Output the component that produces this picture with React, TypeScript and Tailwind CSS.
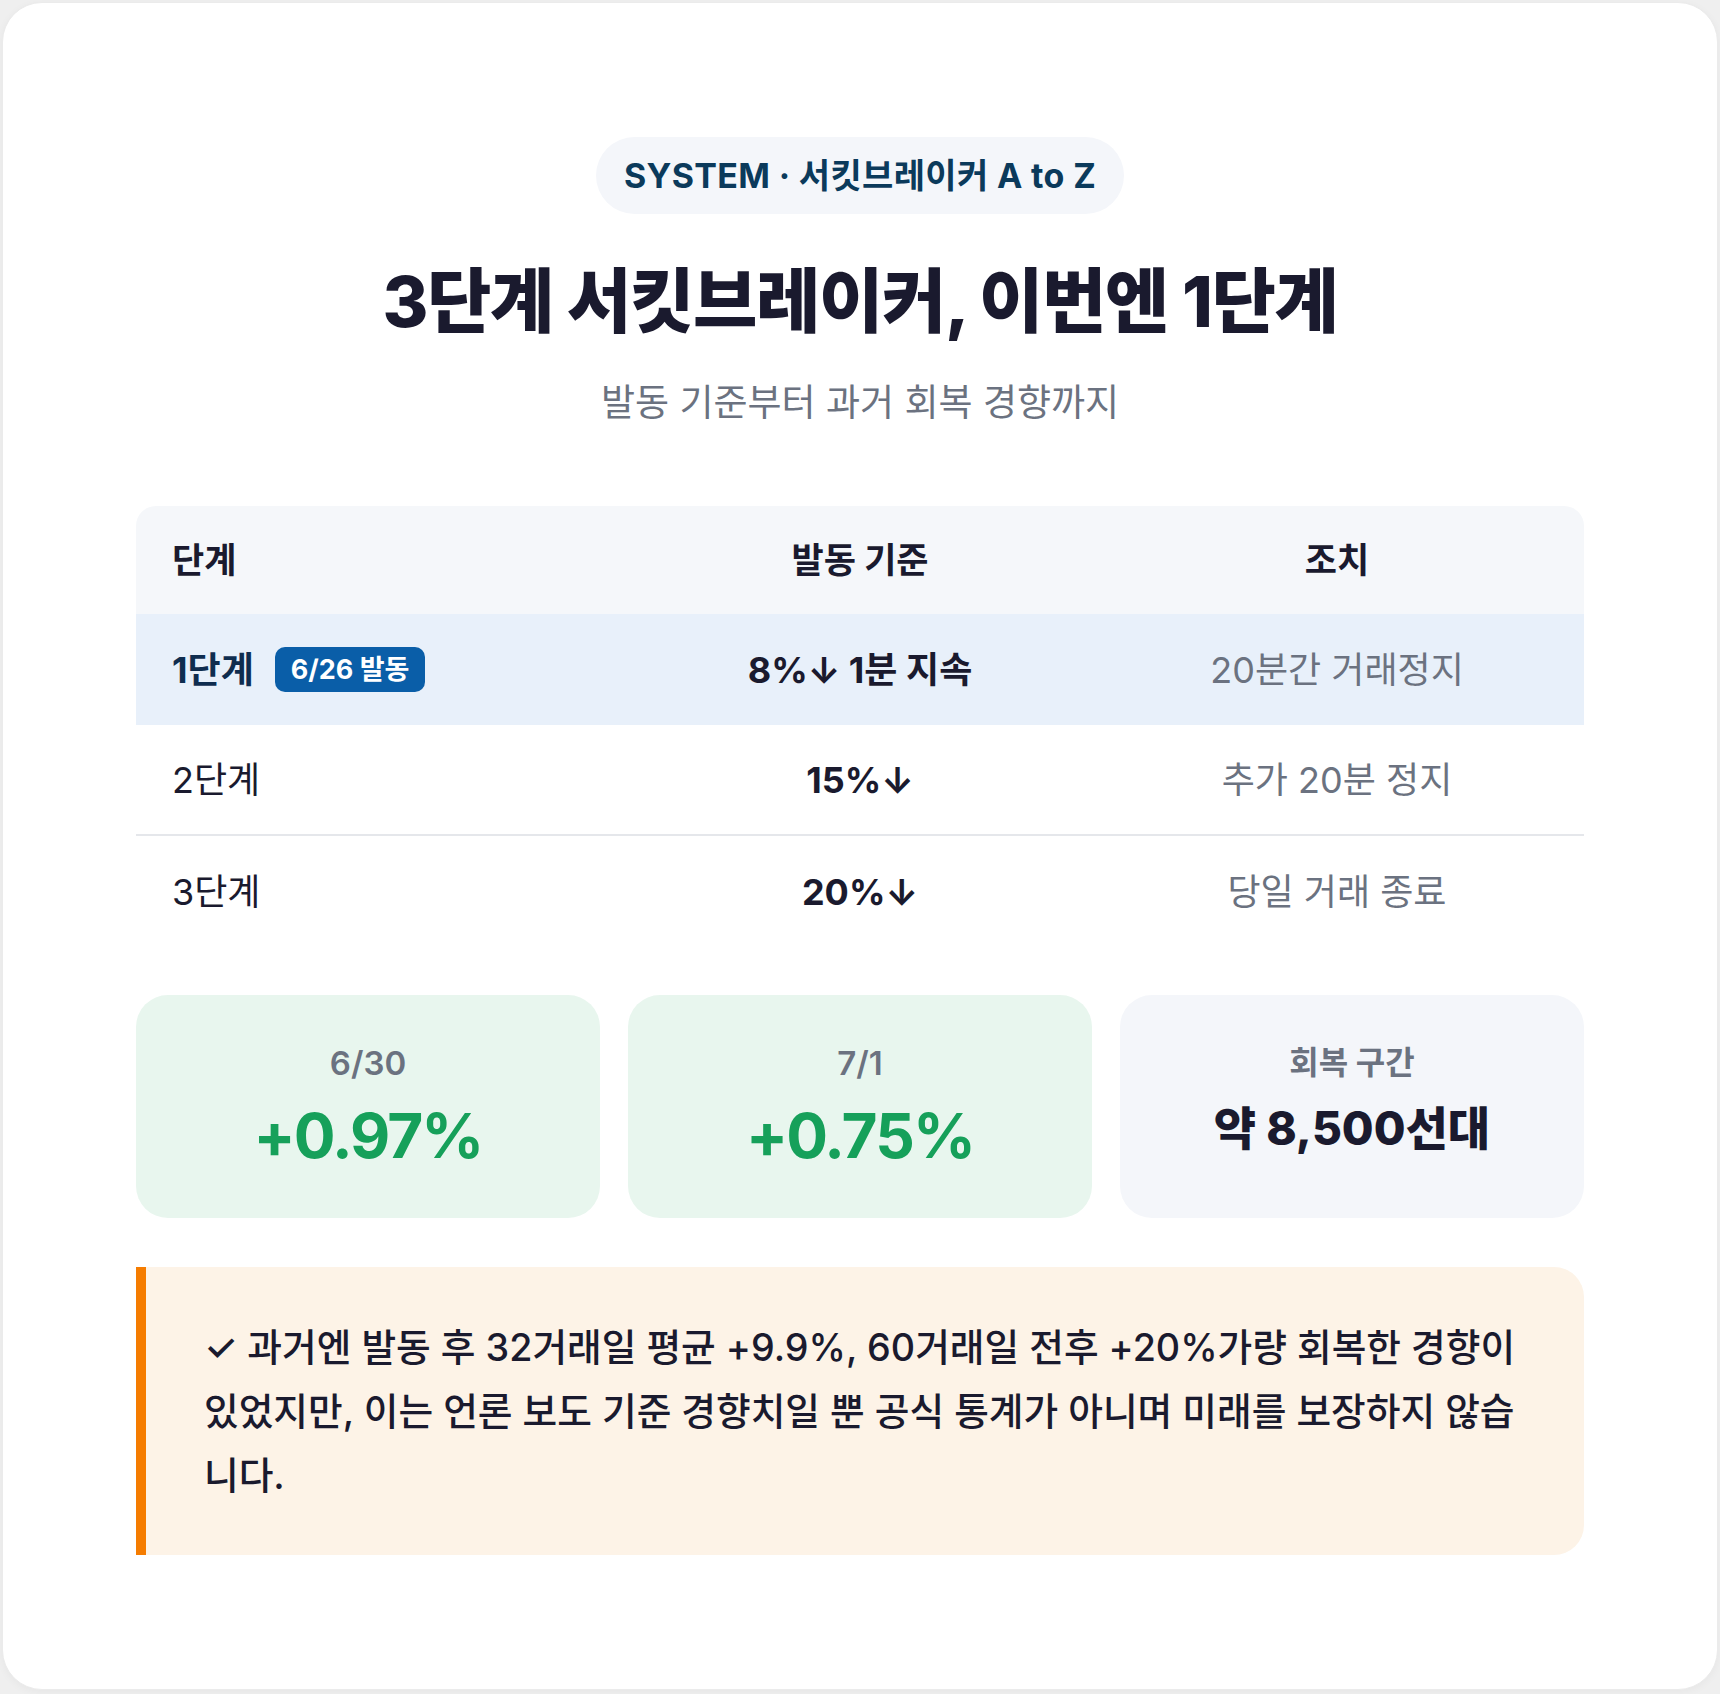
import React from 'react';

type Row = {
  stage: string;
  badge?: string;
  trigger: string;
  action: string;
  active?: boolean;
};

const rows: Row[] = [
  { stage: '1단계', badge: '6/26 발동', trigger: '8%↓ 1분 지속', action: '20분간 거래정지', active: true },
  { stage: '2단계', trigger: '15%↓', action: '추가 20분 정지' },
  { stage: '3단계', trigger: '20%↓', action: '당일 거래 종료' },
];

const App: React.FC = () => {
  return (
    <div className="min-h-screen bg-[#efefef] p-[2px] font-[Inter,'Noto_Sans_CJK_KR',sans-serif] text-[#1a1a2e]">
      <div className="h-[1688px] rounded-[40px] border border-[#ebebeb] bg-white px-[133px] pt-[134px] shadow-[0_2px_8px_rgba(0,0,0,0.04)]">
        {/* heading */}
        <div className="flex flex-col items-center">
          <div className="rounded-full bg-[#f4f6fa] px-7 py-4 text-[34px] font-bold leading-[45px] tracking-[0.01em] text-[#0b3a5b]">
            SYSTEM · 서킷브레이커 A to Z
          </div>
          <h1 className="mt-[48px] text-[70px] font-extrabold leading-[80px] tracking-[-0.02em]">
            3단계 서킷브레이커, 이번엔 1단계
          </h1>
          <p className="mt-[36px] text-[37px] leading-[50px] text-[#6b7280]">발동 기준부터 과거 회복 경향까지</p>
        </div>

        {/* table */}
        <div className="mt-[78px]">
          <div className="grid h-[108px] grid-cols-[494px_460px_494px] items-center rounded-t-[20px] bg-[#f5f7fa] text-[35px] font-bold">
            <div className="pl-9">단계</div>
            <div className="text-center">발동 기준</div>
            <div className="text-center">조치</div>
          </div>
          {rows.map((r, i) => (
            <div
              key={r.stage}
              className={
                'grid h-[111px] grid-cols-[494px_460px_494px] items-center text-[36px] ' +
                (r.active ? 'bg-[#e8f0fa] ' : '') +
                (i === 1 ? 'border-b-2 border-[#e5e7eb]' : '')
              }
            >
              <div className="flex items-center gap-[21px] pl-9">
                <span className={r.active ? 'font-bold text-[#0f2d4f]' : ''}>{r.stage}</span>
                {r.badge && (
                  <span className="rounded-[10px] bg-[#0a5ea8] px-4 py-[6px] text-[27px] font-bold leading-[33px] text-white">
                    {r.badge}
                  </span>
                )}
              </div>
              <div className="text-center font-bold">{r.trigger}</div>
              <div className="text-center text-[#6b7280]">{r.action}</div>
            </div>
          ))}
        </div>

        {/* stats */}
        <div className="mt-[48px] grid grid-cols-3 gap-7">
          <div className="flex h-[223px] flex-col items-center rounded-[32px] bg-[#e8f6ee] pt-[47px]">
            <div className="text-[33px] font-semibold leading-[42px] text-[#6b7280]">6/30</div>
            <div className="mt-[13px] text-[62px] font-bold leading-[77px] tracking-[-0.03em] text-[#16a05a]">+0.97%</div>
          </div>
          <div className="flex h-[223px] flex-col items-center rounded-[32px] bg-[#e8f6ee] pt-[47px]">
            <div className="text-[33px] font-semibold leading-[42px] text-[#6b7280]">7/1</div>
            <div className="mt-[13px] text-[62px] font-bold leading-[77px] tracking-[-0.03em] text-[#16a05a]">+0.75%</div>
          </div>
          <div className="flex h-[223px] flex-col items-center rounded-[32px] bg-[#f4f6fa] pt-[47px]">
            <div className="text-[32px] font-bold leading-[42px] text-[#6b7280]">회복 구간</div>
            <div className="mt-[17px] text-[46px] font-extrabold leading-[55px]">약 8,500선대</div>
          </div>
        </div>

        {/* note */}
        <div className="mt-[49px] rounded-r-[30px] border-l-[10px] border-[#f57c00] bg-[#fdf3e7] py-12 pl-[58px] pr-14">
          <p className="text-[37.7px] font-medium leading-[64px]">
            ✓ 과거엔 발동 후 32거래일 평균 +9.9%, 60거래일 전후 +20%가량 회복한 경향이 있었지만, 이는 언론 보도 기준
            경향치일 뿐 공식 통계가 아니며 미래를 보장하지 않습니다.
          </p>
        </div>
      </div>
    </div>
  );
};

export default App;
